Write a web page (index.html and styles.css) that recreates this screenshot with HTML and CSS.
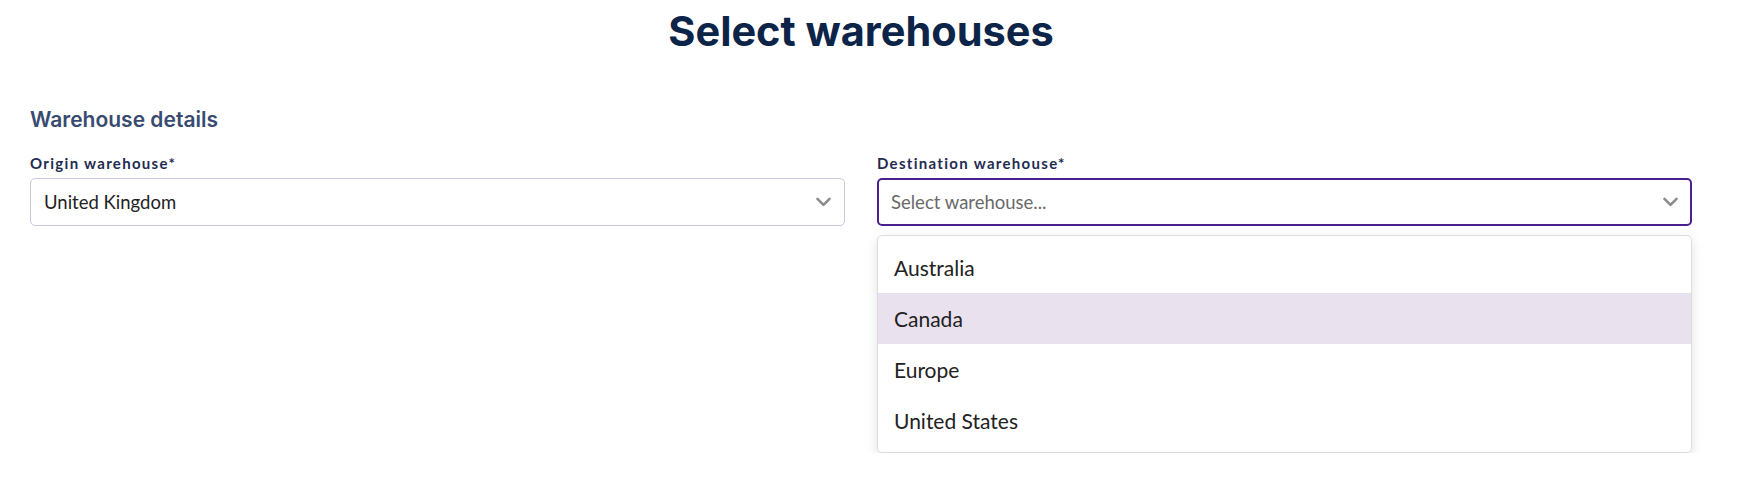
FILE: index.html
```html
<!DOCTYPE html>
<html lang="en">
<head>
    <meta charset="UTF-8">
    <meta name="viewport" content="width=device-width, initial-scale=1.0">
    <title>Select warehouses</title>
    <link rel="stylesheet" href="styles.css">
</head>
<body>
    <div class="page">
        <h1 class="title">Select warehouses</h1>
        <h3 class="section-title">Warehouse details</h3>
        <div class="fields">
            <div class="field">
                <label class="field-label">Origin warehouse*</label>
                <div class="select">
                    <span class="select-value">United Kingdom</span>
                    <svg class="chevron" width="15" height="10" viewBox="0 0 15 10"><path d="M1.5 1.8 L7.5 7.8 L13.5 1.8" fill="none" stroke="#8c8c8c" stroke-width="2.6" stroke-linecap="round" stroke-linejoin="round"/></svg>
                </div>
            </div>
            <div class="field">
                <label class="field-label">Destination warehouse*</label>
                <div class="select select-open">
                    <span class="select-placeholder">Select warehouse...</span>
                    <svg class="chevron" width="15" height="10" viewBox="0 0 15 10"><path d="M1.5 1.8 L7.5 7.8 L13.5 1.8" fill="none" stroke="#8c8c8c" stroke-width="2.6" stroke-linecap="round" stroke-linejoin="round"/></svg>
                </div>
                <ul class="menu">
                    <li class="menu-item">Australia</li>
                    <li class="menu-item menu-item-active">Canada</li>
                    <li class="menu-item">Europe</li>
                    <li class="menu-item">United States</li>
                </ul>
            </div>
        </div>
    </div>
</body>
</html>
```

FILE: styles.css
```css
body {
    margin: 0;
    background: #ffffff;
    font-family: Lato, "Liberation Sans", sans-serif;
    color: #222222;
}
.page {
    padding: 4px 61px 0 30px;
}
.title {
    margin: 0;
    text-align: center;
    font-family: Inter, "Noto Sans", sans-serif;
    font-weight: 700;
    font-size: 41.5px;
    line-height: 54px;
    color: #0d2449;
}
.section-title {
    margin: 49px 0 0 0;
    font-family: Inter, "Noto Sans", sans-serif;
    font-weight: 600;
    font-size: 21px;
    line-height: 26px;
    color: #394a70;
}
.fields {
    display: grid;
    grid-template-columns: 1fr 1fr;
    gap: 32px;
    margin-top: 21px;
}
.field {
    display: flex;
    flex-direction: column;
}
.field-label {
    font-weight: 700;
    font-size: 15px;
    letter-spacing: 1.3px;
    line-height: 18px;
    color: #1f2c52;
    margin-bottom: 6px;
}
.select {
    display: flex;
    align-items: center;
    justify-content: space-between;
    height: 48px;
    box-sizing: border-box;
    border: 1px solid #c6c9df;
    border-radius: 5px;
    padding: 0 13px 0 13px;
    font-size: 18.5px;
}
.select-open {
    border: 2px solid #4b1f8d;
    padding: 0 12px 0 12px;
}
.select-placeholder {
    color: #6a6a6a;
}
.menu {
    list-style: none;
    margin: 9px 0 0 0;
    padding: 6px 0;
    border: 1px solid #dcdcdc;
    border-radius: 5px;
    box-shadow: 0 4px 12px rgba(0, 0, 0, 0.12);
}
.menu-item {
    height: 51px;
    line-height: 51px;
    padding: 0 16px;
    font-size: 21px;
    color: #222222;
}
.menu-item-active {
    background: #e9e1ee;
}
```
